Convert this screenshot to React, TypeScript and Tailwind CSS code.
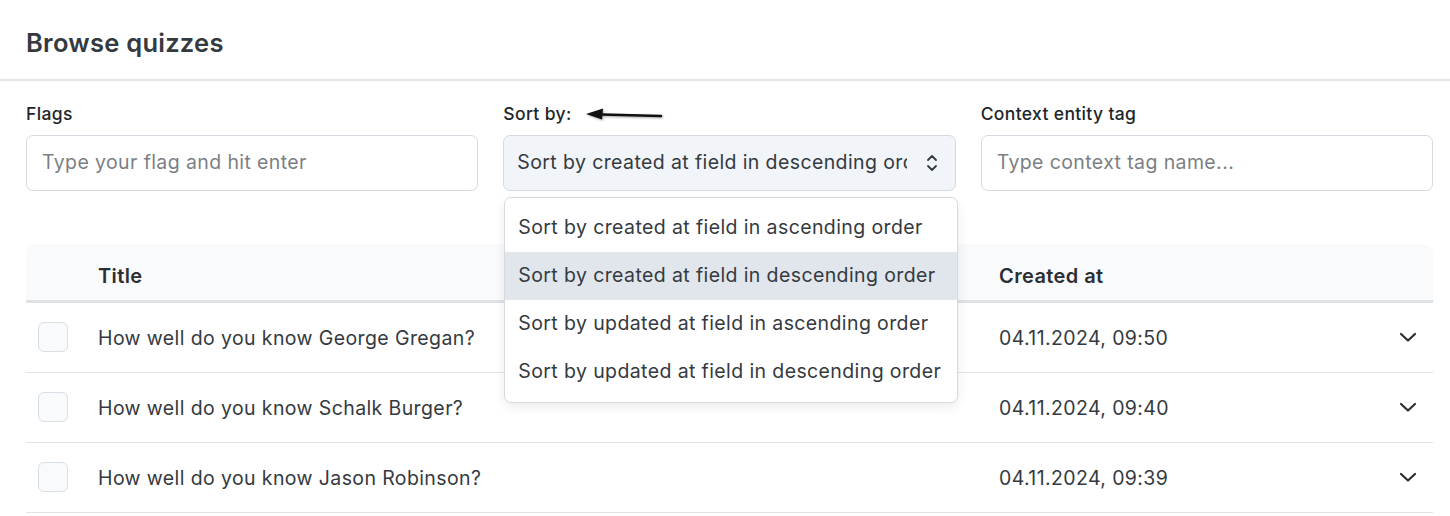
import React from "react";

const rows = [
  { title: "How well do you know George Gregan?", date: "04.11.2024, 09:50" },
  { title: "How well do you know Schalk Burger?", date: "04.11.2024, 09:40" },
  { title: "How well do you know Jason Robinson?", date: "04.11.2024, 09:39" },
];

const options = [
  "Sort by created at field in ascending order",
  "Sort by created at field in descending order",
  "Sort by updated at field in ascending order",
  "Sort by updated at field in descending order",
];

function ChevronDown() {
  return (
    <svg width="22" height="20" viewBox="0 0 22 20" fill="none">
      <path d="M4 7l7 6.5L18 7" stroke="#2b2f33" strokeWidth="2.2" strokeLinecap="round" strokeLinejoin="round" />
    </svg>
  );
}

function UpDown() {
  return (
    <svg width="14" height="22" viewBox="0 0 14 22" fill="none">
      <path d="M3 8l4-4 4 4" stroke="#343a40" strokeWidth="1.8" strokeLinecap="round" strokeLinejoin="round" />
      <path d="M3 14l4 4 4-4" stroke="#343a40" strokeWidth="1.8" strokeLinecap="round" strokeLinejoin="round" />
    </svg>
  );
}

function Arrow() {
  return (
    <svg width="80" height="16" viewBox="0 0 80 16" fill="none" className="drop-shadow-[1px_1.5px_1px_rgba(0,0,0,0.35)]">
      <path d="M76 9 L17 7.5" stroke="#111" strokeWidth="2.4" strokeLinecap="round" />
      <path d="M1 7 L18 1.5 L17 12.5 Z" fill="#111" />
    </svg>
  );
}

const body = "text-[19.5px] tracking-[0.02em]";
const label = "text-[17.5px] tracking-[0.02em] font-medium text-[#212529] h-[22px] leading-[22px]";

export default function App() {
  return (
    <div className="w-[1450px] h-[516px] bg-white overflow-hidden text-[#343a40] font-['Inter','Liberation_Sans',sans-serif]">
      <div className="h-[79px] pl-[26px] flex items-center">
        <h1 className="text-[25.5px] tracking-[0.01em] font-semibold text-[#343a40] pt-[8px]">Browse quizzes</h1>
      </div>
      <div className="h-[2px] bg-[#e2e4e7]" />
      <div className="pl-[26px] w-[1433px]">
        <div className="grid grid-cols-3 gap-[25px] pt-[22px]">
          <div>
            <div className={label}>Flags</div>
            <div className={`mt-[10px] h-[56px] rounded-[7px] border border-[#d5dae0] flex items-center px-[15px] text-[#7b7f84] ${body}`}>
              Type your flag and hit enter
            </div>
          </div>
          <div className="relative">
            <div className="flex items-center h-[22px]">
              <span className={label}>Sort by:</span>
              <span className="ml-[13px] mt-[2px] flex"><Arrow /></span>
            </div>
            <div className={`mt-[10px] h-[56px] rounded-[7px] border border-[#d5dae0] bg-[#f1f4f9] flex items-center pl-[13px] pr-[16px] text-[#343a40] ${body}`}>
              <span className="flex-1 overflow-hidden whitespace-nowrap">Sort by created at field in descending order</span>
              <span className="ml-[18px] flex"><UpDown /></span>
            </div>
            <div className="absolute left-[1px] top-[94px] w-[454px] bg-white rounded-[7px] border border-[#d5dae0] shadow-[0_4px_12px_rgba(0,0,0,0.08)] py-[6px] z-10">
              {options.map((o, i) => (
                <div
                  key={o}
                  className={`h-[48px] flex items-center px-[13px] whitespace-nowrap text-[#343a40] ${body} ${i === 1 ? "bg-[#e1e6ec]" : ""}`}
                >
                  {o}
                </div>
              ))}
            </div>
          </div>
          <div>
            <div className={label}>Context entity tag</div>
            <div className={`mt-[10px] h-[56px] rounded-[7px] border border-[#d5dae0] flex items-center px-[15px] text-[#7b7f84] ${body}`}>
              Type context tag name...
            </div>
          </div>
        </div>

        <div className="mt-[53px]">
          <div className="h-[59px] bg-[#f9fafc] rounded-t-[10px] flex items-center border-b-[3px] border-[#dee1e5] pt-[8px]">
            <div className="w-[72px]" />
            <div className="flex-1 text-[20px] tracking-[0.02em] font-semibold text-[#2b2f33]">Title</div>
            <div className="w-[434px] text-[20px] tracking-[0.02em] font-semibold text-[#2b2f33]">Created at</div>
          </div>
          {rows.map((r) => (
            <div key={r.title} className="h-[70px] flex items-center border-b border-[#e0e3e7] pt-[3px]">
              <div className="w-[72px] pl-[12px] flex">
                <div className="w-[30px] h-[30px] rounded-[6px] border border-[#d9dfe6] bg-[#f8fafc] -mt-[5px]" />
              </div>
              <div className={`flex-1 text-[#343a40] ${body}`}>{r.title}</div>
              <div className={`w-[398px] text-[#343a40] ${body}`}>{r.date}</div>
              <div className="w-[36px] flex -mt-[5px]"><ChevronDown /></div>
            </div>
          ))}
        </div>
      </div>
    </div>
  );
}
